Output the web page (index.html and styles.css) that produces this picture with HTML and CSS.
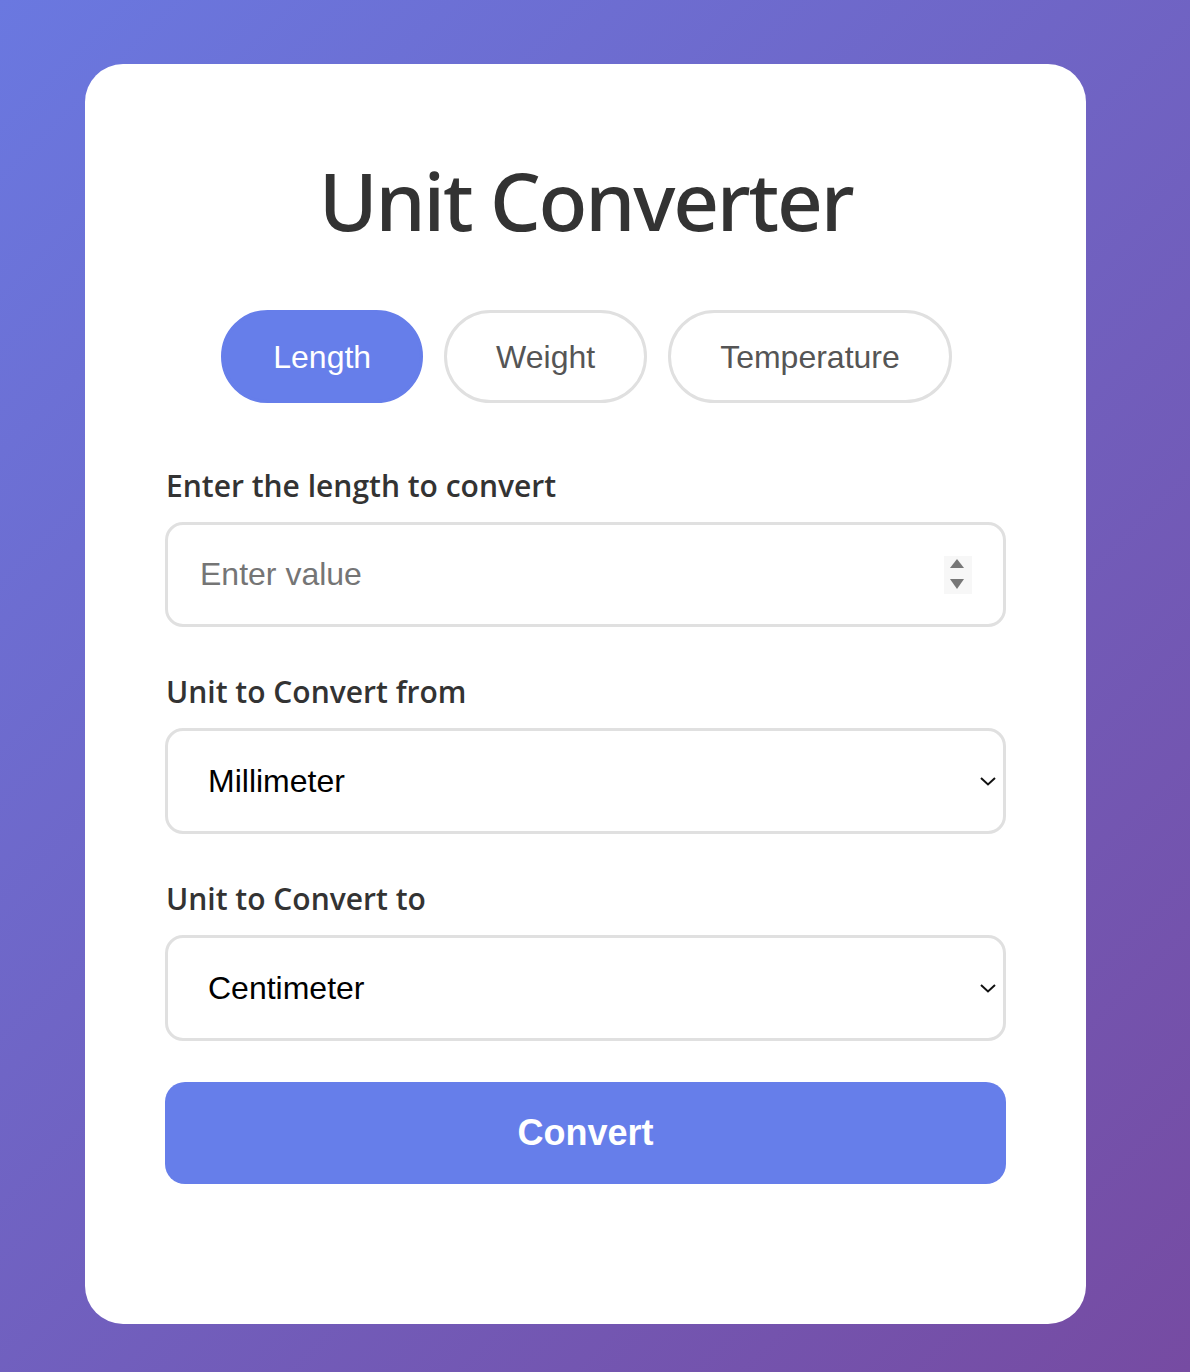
FILE: index.html
```html
<!DOCTYPE html>
<html lang="en">
<head>
<meta charset="utf-8">
<title>Unit Converter</title>
<link rel="stylesheet" href="styles.css">
</head>
<body>
<main class="card">
  <h1 class="title">Unit Converter</h1>
  <div class="tabs">
    <button class="tab tab-active">Length</button>
    <button class="tab">Weight</button>
    <button class="tab">Temperature</button>
  </div>
  <div class="group">
    <label class="label">Enter the length to convert</label>
    <div class="field-wrap">
      <input class="field" type="text" placeholder="Enter value">
      <span class="spinner">
        <svg width="28" height="38" viewBox="0 0 28 38"><rect width="28" height="38" fill="#f7f7f7"/><path d="M6 12 L13 3 L20 12 Z" fill="#777"/><path d="M6 23 L20 23 L13 33 Z" fill="#777"/></svg>
      </span>
    </div>
  </div>
  <div class="group">
    <label class="label">Unit to Convert from</label>
    <div class="field-wrap">
      <div class="field select">Millimeter</div>
      <span class="chevron"><svg width="18" height="12" viewBox="0 0 18 12"><path d="M2 3 L9 9.5 L16 3" fill="none" stroke="#111" stroke-width="2"/></svg></span>
    </div>
  </div>
  <div class="group">
    <label class="label">Unit to Convert to</label>
    <div class="field-wrap">
      <div class="field select">Centimeter</div>
      <span class="chevron"><svg width="18" height="12" viewBox="0 0 18 12"><path d="M2 3 L9 9.5 L16 3" fill="none" stroke="#111" stroke-width="2"/></svg></span>
    </div>
  </div>
  <button class="convert">Convert</button>
</main>
</body>
</html>
```
FILE: styles.css
```css
html, body {
  margin: 0;
  padding: 0;
}
body {
  min-height: 1372px;
  background: linear-gradient(135deg, #6a78e0 0%, #764ba2 100%);
  padding: 64px 0 48px 85px;
  box-sizing: border-box;
  font-family: "Liberation Sans", Arial, sans-serif;
}
.card {
  width: 1001px;
  height: 1260px;
  box-sizing: border-box;
  background: #fff;
  border-radius: 38px;
  padding: 86px 80px 0 80px;
}
.title {
  margin: 0;
  font-family: "Noto Sans", "Open Sans", sans-serif;
  font-weight: 500;
  font-size: 80px;
  line-height: 100px;
  color: #333;
  text-align: center;
  letter-spacing: -2.2px;
}
.tabs {
  display: flex;
  justify-content: center;
  gap: 21px;
  margin-top: 60px;
  padding-left: 2px;
}
.tab {
  font-family: "Liberation Sans", Arial, sans-serif;
  font-size: 32px;
  line-height: 36px;
  height: 93px;
  box-sizing: border-box;
  padding: 0 49px;
  border: 3px solid #e0e0e0;
  border-radius: 47px;
  background: #fff;
  color: #555;
}
.tab-active {
  background: #667eea;
  border-color: #667eea;
  color: #fff;
}
.group {
  margin-top: 63px;
}
.group + .group {
  margin-top: 45px;
}
.label {
  display: block;
  font-family: "Open Sans", "Noto Sans", sans-serif;
  font-weight: 600;
  font-size: 30px;
  line-height: 40px;
  color: #333;
  margin-bottom: 16px;
  margin-left: 1px;
}
.field-wrap {
  position: relative;
}
.field {
  display: block;
  width: 100%;
  height: 105px;
  box-sizing: border-box;
  border: 3px solid #e0e0e0;
  border-radius: 18px;
  padding: 0 32px;
  font-family: "Liberation Sans", Arial, sans-serif;
  font-size: 32px;
  color: #000;
  background: #fff;
  outline: none;
}
.field::placeholder {
  color: #757575;
}
.select {
  height: 106px;
  line-height: 100px;
  padding: 0 40px;
}
.spinner {
  position: absolute;
  right: 34px;
  top: 34px;
  line-height: 0;
}
.chevron {
  position: absolute;
  right: 9px;
  top: 47px;
  line-height: 0;
}
.convert {
  display: block;
  width: 841px;
  height: 102px;
  margin-top: 41px;
  border: none;
  border-radius: 20px;
  background: #667eea;
  color: #fff;
  font-family: "Liberation Sans", Arial, sans-serif;
  font-weight: 700;
  font-size: 36px;
}
```
